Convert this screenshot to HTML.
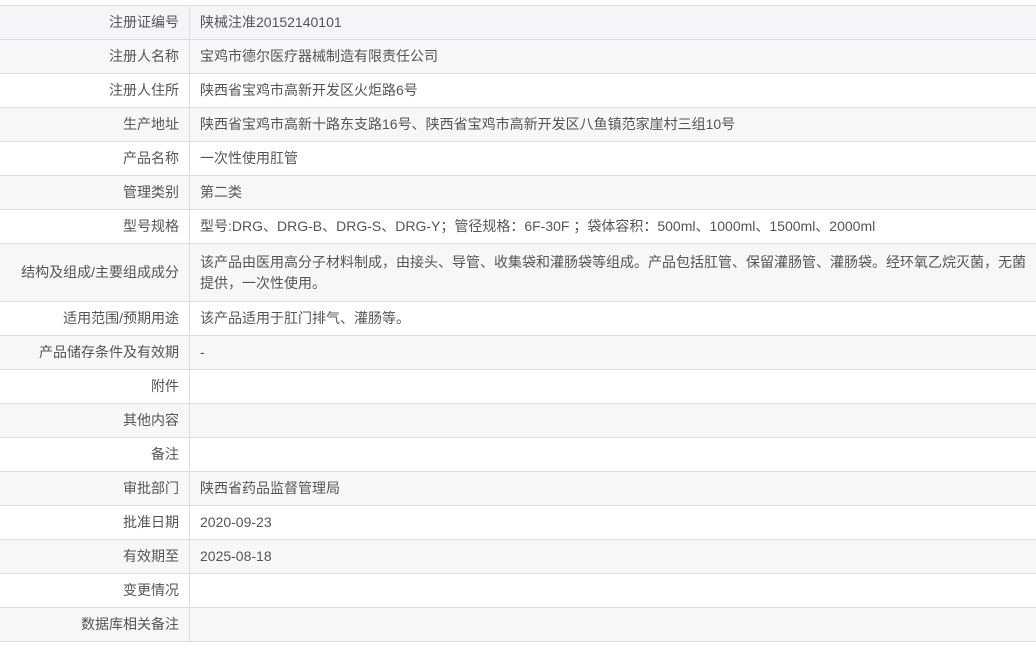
<!DOCTYPE html>
<html><head><meta charset="utf-8"><style>
body{margin:0;background:#fff;font-family:"Liberation Sans","Noto Sans CJK SC",sans-serif;font-size:14px;color:#555}
table{position:absolute;top:5px;left:0;width:1036px;border-collapse:collapse;table-layout:fixed}
td{border-top:1px solid #ddd;border-bottom:1px solid #ddd;height:33px;padding:0 10px;line-height:21px;vertical-align:middle}
td.l{width:169px;text-align:right;border-right:1px solid #ddd}
td.v{padding-right:6px}
tr:nth-child(even){background:#f7f7f7}
tr:first-child{background:#f4f5f9}
tr.t td{height:57px}
</style></head><body>
<table>
<tr><td class="l">注册证编号</td><td class="v">陕械注准20152140101</td></tr>
<tr><td class="l">注册人名称</td><td class="v">宝鸡市德尔医疗器械制造有限责任公司</td></tr>
<tr><td class="l">注册人住所</td><td class="v">陕西省宝鸡市高新开发区火炬路6号</td></tr>
<tr><td class="l">生产地址</td><td class="v">陕西省宝鸡市高新十路东支路16号、陕西省宝鸡市高新开发区八鱼镇范家崖村三组10号</td></tr>
<tr><td class="l">产品名称</td><td class="v">一次性使用肛管</td></tr>
<tr><td class="l">管理类别</td><td class="v">第二类</td></tr>
<tr><td class="l">型号规格</td><td class="v">型号:DRG、DRG-B、DRG-S、DRG-Y；管径规格：6F-30F ；袋体容积：500ml、1000ml、1500ml、2000ml</td></tr>
<tr class="t"><td class="l">结构及组成/主要组成成分</td><td class="v">该产品由医用高分子材料制成，由接头、导管、收集袋和灌肠袋等组成。产品包括肛管、保留灌肠管、灌肠袋。经环氧乙烷灭菌，无菌<br>提供，一次性使用。</td></tr>
<tr><td class="l">适用范围/预期用途</td><td class="v">该产品适用于肛门排气、灌肠等。</td></tr>
<tr><td class="l">产品储存条件及有效期</td><td class="v">-</td></tr>
<tr><td class="l">附件</td><td class="v"></td></tr>
<tr><td class="l">其他内容</td><td class="v"></td></tr>
<tr><td class="l">备注</td><td class="v"></td></tr>
<tr><td class="l">审批部门</td><td class="v">陕西省药品监督管理局</td></tr>
<tr><td class="l">批准日期</td><td class="v">2020-09-23</td></tr>
<tr><td class="l">有效期至</td><td class="v">2025-08-18</td></tr>
<tr><td class="l">变更情况</td><td class="v"></td></tr>
<tr><td class="l">数据库相关备注</td><td class="v"></td></tr>
</table>
</body></html>
